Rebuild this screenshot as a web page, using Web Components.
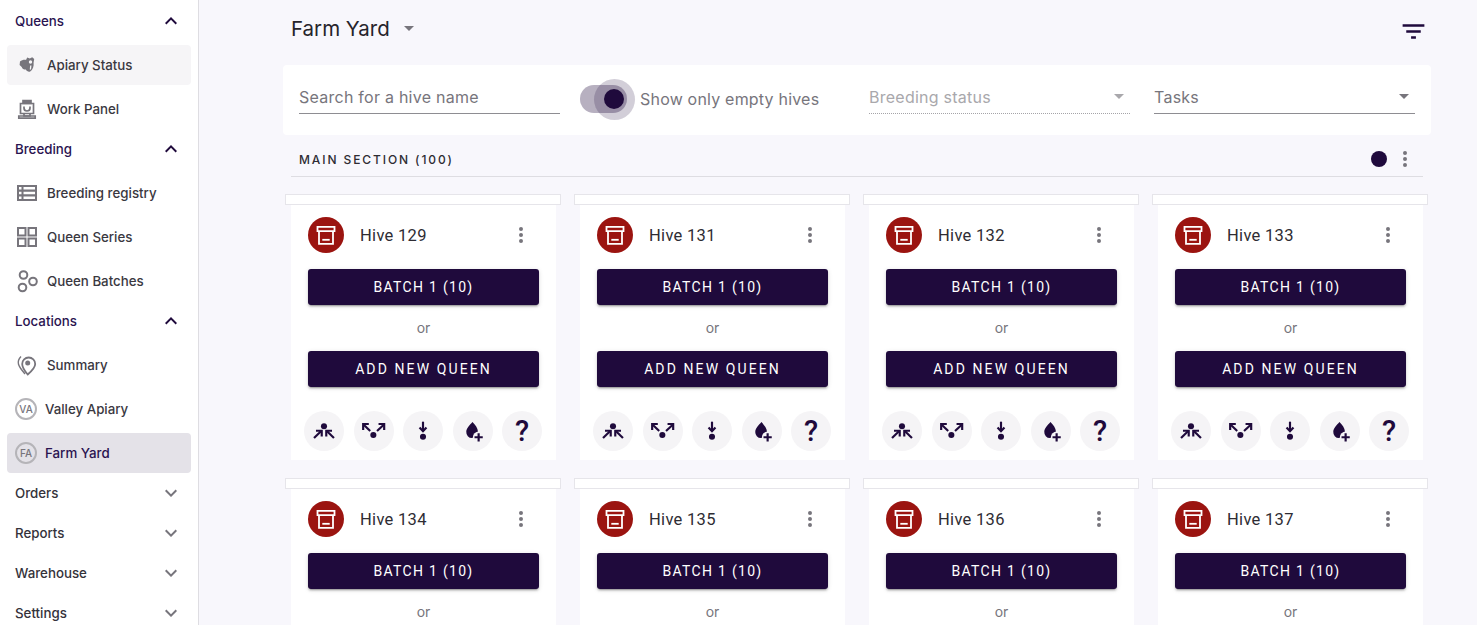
<!DOCTYPE html>
<html>
<head>
<meta charset="utf-8">
<title>Farm Yard</title>
<style>
  html, body { margin: 0; height: 100%; overflow: hidden; }
  body { background: #f8f7fc; font-family: 'Inter', 'Liberation Sans', sans-serif; }
  hive-app { height: 625px; }
</style>
</head>
<body>

<hive-app>
  <app-sidebar slot="sidebar">
    <nav-section open active>Queens</nav-section>
    <nav-item icon="status" hover>Apiary Status</nav-item>
    <nav-item icon="panel">Work Panel</nav-item>
    <nav-section open active>Breeding</nav-section>
    <nav-item icon="registry">Breeding registry</nav-item>
    <nav-item icon="series">Queen Series</nav-item>
    <nav-item icon="batches">Queen Batches</nav-item>
    <nav-section open active>Locations</nav-section>
    <nav-item icon="pin">Summary</nav-item>
    <nav-item initials="VA">Valley Apiary</nav-item>
    <nav-item initials="FA" selected>Farm Yard</nav-item>
    <nav-section>Orders</nav-section>
    <nav-section>Reports</nav-section>
    <nav-section>Warehouse</nav-section>
    <nav-section>Settings</nav-section>
  </app-sidebar>

  <yard-title>Farm Yard</yard-title>
  <filter-bar></filter-bar>
  <section-head>MAIN SECTION (100)</section-head>
  <hive-grid>
    <hive-card>Hive 129</hive-card>
    <hive-card>Hive 131</hive-card>
    <hive-card>Hive 132</hive-card>
    <hive-card>Hive 133</hive-card>
    <hive-card fold>Hive 134</hive-card>
    <hive-card fold>Hive 135</hive-card>
    <hive-card fold>Hive 136</hive-card>
    <hive-card fold>Hive 137</hive-card>
  </hive-grid>
</hive-app>

<script>
// icons, all on a 24 box
const ICONS = {
  up: '<path fill="currentColor" d="M7.41 15.41 12 10.83l4.59 4.58L18 14l-6-6-6 6z"/>',
  down: '<path fill="currentColor" d="M7.41 8.59 12 13.17l4.59-4.58L18 10l-6 6-6-6z"/>',
  kebab: '<path fill="currentColor" d="M12 8a2 2 0 1 0 0-4 2 2 0 0 0 0 4zm0 2a2 2 0 1 0 0 4 2 2 0 0 0 0-4zm0 6a2 2 0 1 0 0 4 2 2 0 0 0 0-4z"/>',
  filter: '<path fill="currentColor" d="M10 18h4v-2h-4v2zM3 6v2h18V6H3zm3 7h12v-2H6v2z"/>',
  status: '<path fill="currentColor" d="M5 8.500c1.500-1.300 3.500-1.800 6-1.600l1.200-2.400 2.600 1 2.400-1.300 2 1.800-.6 3.400c.5 3.500-.8 7.300-3.400 9.200-1.900.6-3.600-.4-4.300-2-2 .1-3.600-.8-4.200-2.600L4.600 12z"/><circle cx="15.500" cy="9" r="1.700" fill="#f6f5f7"/><path d="M15.800 12.500l-.4 4" stroke="#f6f5f7" stroke-width="1.300"/>',
  panel: '<g fill="none" stroke="currentColor" stroke-width="1.700"><path d="M5.500 6.500h13v10h-13z"/><path d="M8 3.500h8v3H8z" fill="currentColor"/><path d="M9 9.500v1.500a3 3 0 0 0 6 0V9.500"/><path d="M3.800 19h16.400v2.200H3.800z"/><path d="M9 16.500v2.500h6v-2.500"/></g>',
  registry: '<path fill="currentColor" fill-rule="evenodd" d="M2 4h20v16H2zm2 2v2.500h2.500V6zm4.500 0v2.500H20V6zM4 10.700v2.600h2.500v-2.600zm4.500 0v2.600H20v-2.600zM4 15.500V18h2.500v-2.500zm4.500 0V18H20v-2.500z"/>',
  series: '<path fill="none" stroke="currentColor" stroke-width="2" d="M3 3h7.500v7.500H3zm10.500 0H21v7.500h-7.500zM3 13.500h7.500V21H3zm10.500 0H21V21h-7.500z"/>',
  batches: '<g fill="none" stroke="currentColor" stroke-width="2"><circle cx="8.500" cy="6" r="3.800"/><circle cx="18" cy="12.500" r="3.800"/><circle cx="7.500" cy="18.500" r="3.800"/></g>',
  pin: '<g fill="none" stroke="currentColor"><path stroke-width="1.800" d="M14.500 21.500c-3-3.500-5.500-7-5.500-10.500a6.500 6.500 0 0 1 13 0c0 3.500-4 7.500-7.500 10.500z" transform="translate(-1.800 0)"/><path stroke-width="1.400" d="M6 3.500C3.500 6 2.800 8.600 3.500 11.300c.8 3 3.500 6.200 6.500 9.700"/></g><circle cx="12.700" cy="10" r="2.500" fill="currentColor"/>',
  box: '<g fill="none" stroke="currentColor" stroke-width="1.800"><path d="M3.500 3.900h17v4.300h-17z"/><path d="M5 8.200V20.800h14V8.200"/><path d="M8.300 16.800h7.400"/></g>',
  merge: '<circle cx="12" cy="7.600" r="2.800" fill="currentColor"/><g fill="none" stroke="currentColor" stroke-width="2"><path d="M2.800 18.500L9.200 12.300"/><path d="M4.600 11.800h5.300v5.300"/><path d="M21.200 18.500L14.800 12.300"/><path d="M19.400 11.800h-5.300v5.300"/></g>',
  split: '<circle cx="11.400" cy="15.700" r="2.800" fill="currentColor"/><g fill="none" stroke="currentColor" stroke-width="2"><path d="M2.500 6.200L8.500 12"/><path d="M2 11V5.500h5.200"/><path d="M21 6.200L14.800 12"/><path d="M21.400 11V5.500h-5.200"/></g>',
  drip: '<circle cx="12" cy="17.300" r="2.800" fill="currentColor"/><g fill="none" stroke="currentColor" stroke-width="2"><path d="M12 3.400V12"/><path d="M8.800 8.800l3.200 3.400 3.200-3.400"/></g>',
  drop: '<path fill="currentColor" d="M11.500 3.800c2.600 2.800 5 5.700 5 8.500a5.600 5.600 0 0 1-5.500 6.200 5.400 5.400 0 0 1-5.200-5.700c0-3 3.200-6.300 5.700-9z"/><circle cx="17.200" cy="17.800" r="5.300" fill="#f5f4f6"/><path fill="none" stroke="currentColor" stroke-width="2" d="M17.200 14v7.600M13.400 17.800H21"/>'
};
const svg = (name, size) => `<svg viewBox="0 0 24 24" width="${size}" height="${size}">${ICONS[name]}</svg>`;

class HiveApp extends HTMLElement {
  constructor() {
    super();
    this.attachShadow({mode: 'open'});
    this.shadowRoot.innerHTML = `
      <style>
        :host { display: flex; }
        main { flex: 1; min-width: 0; height: 625px; overflow: hidden; padding: 0 46px 0 84px; }
      </style>
      <slot name="sidebar"></slot>
      <main><slot></slot></main>`;
  }
}

class AppSidebar extends HTMLElement {
  constructor() {
    super();
    this.attachShadow({mode: 'open'});
    this.shadowRoot.innerHTML = `
      <style>
        :host { display: block; flex: none; width: 198px; height: 624px; padding-top: 1px; overflow: hidden;
                background: #fff; border-right: 1px solid #dedde2; }
      </style>
      <slot></slot>`;
  }
}

class NavSection extends HTMLElement {
  constructor() {
    super();
    this.attachShadow({mode: 'open'});
    const open = this.hasAttribute('open');
    this.shadowRoot.innerHTML = `
      <style>
        :host { display: flex; align-items: center; height: 40px; padding: 0 15px; justify-content: space-between;
                font-size: 13.3px; font-weight: 500; color: ${this.hasAttribute('active') ? '#2a1350' : '#34323a'}; }
        span { color: ${open ? '#1f0a3c' : '#77757c'}; display: flex; }
      </style>
      <slot></slot><span>${svg(open ? 'up' : 'down', 24)}</span>`;
  }
}

class NavItem extends HTMLElement {
  constructor() {
    super();
    this.attachShadow({mode: 'open'});
    const initials = this.getAttribute('initials');
    const lead = initials
      ? `<b>${initials}</b>`
      : `<i>${svg(this.getAttribute('icon'), 24)}</i>`;
    const bg = this.hasAttribute('selected') ? '#e4e2e8' : this.hasAttribute('hover') ? '#f6f5f7' : 'transparent';
    this.shadowRoot.innerHTML = `
      <style>
        :host { display: flex; align-items: center; height: 40px; margin: 4px 7px 0; border-radius: 4px; background: ${bg};
                font-size: 13.3px; font-weight: 500; color: ${this.hasAttribute('selected') ? '#2a1350' : '#3a383f'}; }
        i { display: flex; color: #77757c; margin: 0 8px 0 8px; }
        b { box-sizing: border-box; width: 22px; height: 22px; margin: 0 8px 0 8px; border: 2px solid #b5b4b8; border-radius: 50%;
            display: flex; align-items: center; justify-content: center; font: 500 10px 'Inter', sans-serif; color: #77757c; }
      </style>
      ${lead}<slot></slot>`;
  }
}

class YardTitle extends HTMLElement {
  constructor() {
    super();
    this.attachShadow({mode: 'open'});
    this.shadowRoot.innerHTML = `
      <style>
        :host { display: flex; align-items: center; height: 65px; padding: 0 7px 9px 8px; box-sizing: border-box;
                font-size: 20.5px; font-weight: 400; color: #26242b; }
        .caret { margin-left: 14px; width: 0; height: 0; border: 5.5px solid transparent; border-top: 5.5px solid #77757c; border-bottom: 0; }
        .filter { margin-left: auto; display: flex; color: #1f0a3c; margin-top: 6px; margin-right: -4px; }
      </style>
      <slot></slot><span class="caret"></span><span class="filter">${svg('filter', 29)}</span>`;
  }
}

class FilterField extends HTMLElement {
  constructor() {
    super();
    this.attachShadow({mode: 'open'});
    const off = this.hasAttribute('disabled');
    const caret = this.hasAttribute('select') ? `<span class="caret"></span>` : '';
    this.shadowRoot.innerHTML = `
      <style>
        :host { display: flex; align-items: center; flex: none; width: 261px; height: 25px; padding-bottom: 4px; margin-top: 19px; box-sizing: content-box;
                border-bottom: 1px ${off ? 'dotted #a5a4a8' : 'solid #8e8d92'};
                font-size: 16px; letter-spacing: .25px; color: ${off ? '#a9a8ac' : '#77757c'}; justify-content: space-between; }
        .caret { margin-right: 6px; width: 0; height: 0; border: 5.5px solid transparent; border-top: 5.5px solid ${off ? '#a9a8ac' : '#77757c'}; border-bottom: 0; }
      </style>
      <slot></slot>${caret}`;
  }
}

class EmptyToggle extends HTMLElement {
  constructor() {
    super();
    this.attachShadow({mode: 'open'});
    this.shadowRoot.innerHTML = `
      <style>
        :host { display: flex; align-items: center; flex: none; width: 269px; height: 70px; margin: 0 20px; box-sizing: border-box; padding-bottom: 2px;
                font-size: 16px; letter-spacing: .2px; color: #77757c; }
        .track { position: relative; flex: none; width: 47px; height: 28px; border-radius: 14px; background: rgba(31,10,60,.32); margin-right: 13px; }
        .halo { position: absolute; left: 14px; top: -6px; width: 41px; height: 41px; border-radius: 50%; background: rgba(31,10,60,.2); }
        .knob { position: absolute; left: 24px; top: 4px; width: 20px; height: 20px; border-radius: 50%; background: #1f0a3c; }
      </style>
      <span class="track"><span class="halo"></span><span class="knob"></span></span><slot></slot>`;
  }
}

class FilterBar extends HTMLElement {
  constructor() {
    super();
    this.attachShadow({mode: 'open'});
    this.shadowRoot.innerHTML = `
      <style>
        :host { display: flex; height: 70px; padding: 0 16px; background: #fff; border-radius: 4px; box-sizing: border-box; }
        .gap { width: 24px; flex: none; }
      </style>
      <filter-field>Search for a hive name</filter-field>
      <empty-toggle>Show only empty hives</empty-toggle>
      <filter-field select disabled>Breeding status</filter-field>
      <span class="gap"></span>
      <filter-field select>Tasks</filter-field>`;
  }
}

class SectionHead extends HTMLElement {
  constructor() {
    super();
    this.attachShadow({mode: 'open'});
    this.shadowRoot.innerHTML = `
      <style>
        :host { display: flex; align-items: center; height: 34px; margin: 0 8px; padding: 7px 6px 0 8px; border-bottom: 1px solid #dedde2;
                font-size: 12px; font-weight: 500; letter-spacing: 1.9px; color: #2e2c33; }
        .dot { margin-left: auto; width: 16px; height: 16px; border-radius: 50%; background: #1f0a3c; }
        .more { display: flex; color: #77757c; margin-left: 6px; }
      </style>
      <slot></slot><span class="dot"></span><span class="more">${svg('kebab', 24)}</span>`;
  }
}

class HiveGrid extends HTMLElement {
  constructor() {
    super();
    this.attachShadow({mode: 'open'});
    this.shadowRoot.innerHTML = `
      <style>
        :host { display: grid; grid-template-columns: repeat(4, 276px); column-gap: 13px; row-gap: 18px; margin: 17px 0 0 2px; }
      </style>
      <slot></slot>`;
  }
}

class RoundAction extends HTMLElement {
  constructor() {
    super();
    this.attachShadow({mode: 'open'});
    const name = this.getAttribute('icon');
    this.shadowRoot.innerHTML = `
      <style>
        :host { display: flex; align-items: center; justify-content: center; width: 40px; height: 40px; border-radius: 50%;
                background: #f5f4f6; color: #1f0a3c; font: 500 29px 'Roboto', sans-serif; }
      </style>
      ${name ? svg(name, 26) : '<slot></slot>'}`;
  }
}

class HiveCard extends HTMLElement {
  constructor() {
    super();
    this.attachShadow({mode: 'open'});
    // a card with "fold" runs off the bottom of the page, so only the part above the fold is built
    const rest = this.hasAttribute('fold') ? '' : `
        <div class="btn second">ADD NEW QUEEN</div>
        <div class="actions">
          <round-action icon="merge"></round-action>
          <round-action icon="split"></round-action>
          <round-action icon="drip"></round-action>
          <round-action icon="drop"></round-action>
          <round-action>?</round-action>
        </div>`;
    this.shadowRoot.innerHTML = `
      <style>
        :host { display: block; }
        .strip { height: 11px; box-sizing: border-box; background: #fff; border: 1px solid #e6e5ea; }
        .body { margin: 0 5px 0 6px; padding: 12px 17px 9px; background: #fff; }
        .head { display: flex; align-items: center; height: 36px; font: 400 16.5px 'Roboto', sans-serif; letter-spacing: .3px; color: #2e2c33; }
        .avatar { flex: none; display: flex; align-items: center; justify-content: center; width: 36px; height: 36px; margin-right: 16px;
                  border-radius: 50%; background: #9b1410; color: #fff; }
        .more { margin-left: auto; margin-right: 6px; display: flex; color: #77757c; }
        .btn { display: flex; align-items: center; justify-content: center; height: 36px; border-radius: 3px; background: #1f0a3c; color: #fff;
               font: 400 14px 'Roboto', sans-serif;
               box-shadow: 0 3px 1px -2px rgba(0,0,0,.2), 0 2px 2px 0 rgba(0,0,0,.14), 0 1px 5px 0 rgba(0,0,0,.12); }
        .first { margin-top: 16px; letter-spacing: 1.3px; }
        .second { letter-spacing: 2.1px; }
        .or { margin: 14px 0 15px; line-height: 17px; text-align: center; font-size: 14px; color: #77757c; }
        .actions { display: flex; justify-content: space-between; margin: 24px -3px 0 -4px; }
      </style>
      <div class="strip"></div>
      <div class="body">
        <div class="head">
          <span class="avatar">${svg('box', 24)}</span>
          <slot></slot>
          <span class="more">${svg('kebab', 24)}</span>
        </div>
        <div class="btn first">BATCH 1 (10)</div>
        <div class="or">or</div>${rest}
      </div>`;
  }
}

// children first, so the ones used inside shadow roots are ready
customElements.define('round-action', RoundAction);
customElements.define('filter-field', FilterField);
customElements.define('empty-toggle', EmptyToggle);
customElements.define('filter-bar', FilterBar);
customElements.define('section-head', SectionHead);
customElements.define('hive-card', HiveCard);
customElements.define('hive-grid', HiveGrid);
customElements.define('yard-title', YardTitle);
customElements.define('nav-section', NavSection);
customElements.define('nav-item', NavItem);
customElements.define('app-sidebar', AppSidebar);
customElements.define('hive-app', HiveApp);
</script>
</body>
</html>
